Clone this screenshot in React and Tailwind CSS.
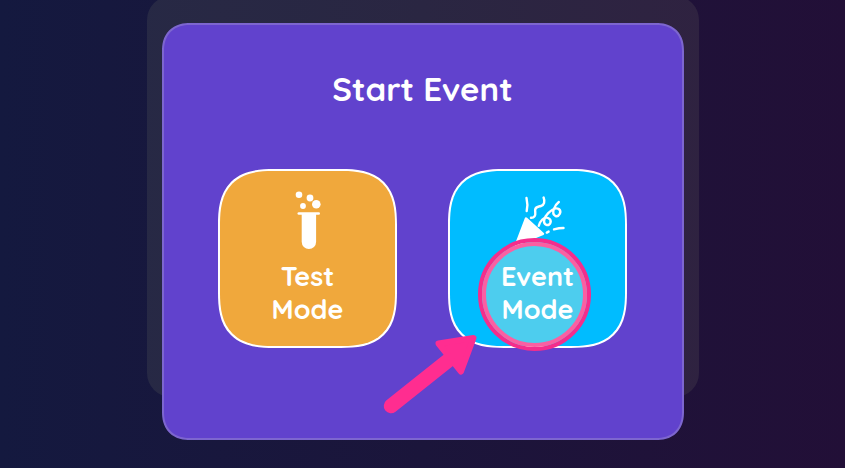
import React from "react";

function TestTubeIcon() {
  return (
    <svg viewBox="0 0 60 60" className="size-15" fill="white" aria-hidden="true">
      <circle cx="21" cy="4.8" r="3.3" />
      <circle cx="32" cy="8" r="3.4" />
      <circle cx="25" cy="16" r="2.9" />
      <circle cx="38.3" cy="14.2" r="4.3" />
      <rect x="19.5" y="22.2" width="22.5" height="2.6" rx="1.3" />
      <path d="M23.7 23.5h14.4v28.3a7.2 7.2 0 0 1-14.4 0Z" />
    </svg>
  );
}

function PartyPopperIcon() {
  return (
    <svg
      viewBox="0 0 60 60"
      className="size-15"
      fill="none"
      stroke="white"
      strokeWidth="2.4"
      strokeLinecap="round"
      strokeLinejoin="round"
      aria-hidden="true"
    >
      <path d="M18 28.5 35 43.8 8 54.8Z" fill="white" />
      <path d="M18.5 8C19.6 12.5 19.6 17 18.7 21" />
      <path d="M35.6 7.5C37.2 11.5 36.2 15.2 33 16C30 16.7 27.6 16.7 27.2 19.5C26.8 22 28.2 24.2 26.6 26.2C25.6 27.5 24 27.9 23 27.8" />
      <path d="M30.8 35.8C32 31 36 26.4 40 28C44.8 30 42.4 36.2 38.4 34.8C34 33 36.6 26.8 40.2 23.2C43.4 20 47.6 17 50.8 19C54.2 21.6 51 27.6 47.2 25.8C42.8 23.4 46.6 15.2 50.8 12" />
      <path d="M38.8 42.6 40.6 41.6M46 39.4C49 38.6 52 38 55.5 38" />
    </svg>
  );
}

const modes = [
  { id: "test", label: "Test", icon: TestTubeIcon, color: "bg-[#f0a83c]" },
  { id: "event", label: "Event", icon: PartyPopperIcon, color: "bg-[#00bcff]", highlighted: true },
];

function Highlight() {
  return (
    <>
      <span className="pointer-events-none absolute top-[67px] left-[28px] size-[113px] rounded-full border-4 border-[#f52d8c] bg-[#fff5c6]/30">
        <span className="block size-full rounded-full border-4 border-[#fb5fa2]" />
      </span>
      <svg
        viewBox="0 0 100 90"
        className="pointer-events-none absolute top-[158px] -left-[70px] w-[100px]"
        fill="#ff2d90"
        stroke="#ff2d90"
        strokeLinecap="round"
        strokeLinejoin="round"
        aria-hidden="true"
      >
        <path d="M11 77 70 30" strokeWidth="14.5" />
        <path d="M93.5 9 58.5 14.5 81 42.5Z" strokeWidth="6" />
      </svg>
    </>
  );
}

function ModeButton({ mode }) {
  const Icon = mode.icon;

  return (
    <button
      type="button"
      className={`${mode.color} relative flex aspect-square w-full max-w-[179px] flex-col items-center rounded-[56px] [corner-shape:superellipse(1.4)] border-2 border-white pt-[19px] text-[27px] leading-[33px] font-bold text-white`}
    >
      <Icon />
      {mode.highlighted && <Highlight />}
      <span className="relative mt-2.5">{mode.label}</span>
      <span className="relative">Mode</span>
    </button>
  );
}

export default function App() {
  return (
    <main className="relative flex min-h-screen flex-col items-center overflow-hidden bg-linear-to-r from-[#14193f] via-[#1b153b] to-[#220f37] px-4 py-[23px] font-[Quicksand,Lato,sans-serif]">
      <div className="absolute inset-x-4 -top-1 mx-auto h-[401px] max-w-[552px] rounded-3xl bg-[#a0a878]/12" />

      <section
        role="dialog"
        aria-labelledby="start-event-title"
        className="relative w-full max-w-[522px] rounded-[28px] [corner-shape:superellipse(1.2)] border-2 border-[#7d66cf] bg-[#6142cd] px-12 pt-11 pb-[90px]"
      >
        <h1 id="start-event-title" className="text-center text-[33px] leading-10 font-bold text-white">
          Start Event
        </h1>
        <div className="mt-[60px] flex justify-center gap-[51px]">
          {modes.map((mode) => (
            <ModeButton key={mode.id} mode={mode} />
          ))}
        </div>
      </section>
    </main>
  );
}
